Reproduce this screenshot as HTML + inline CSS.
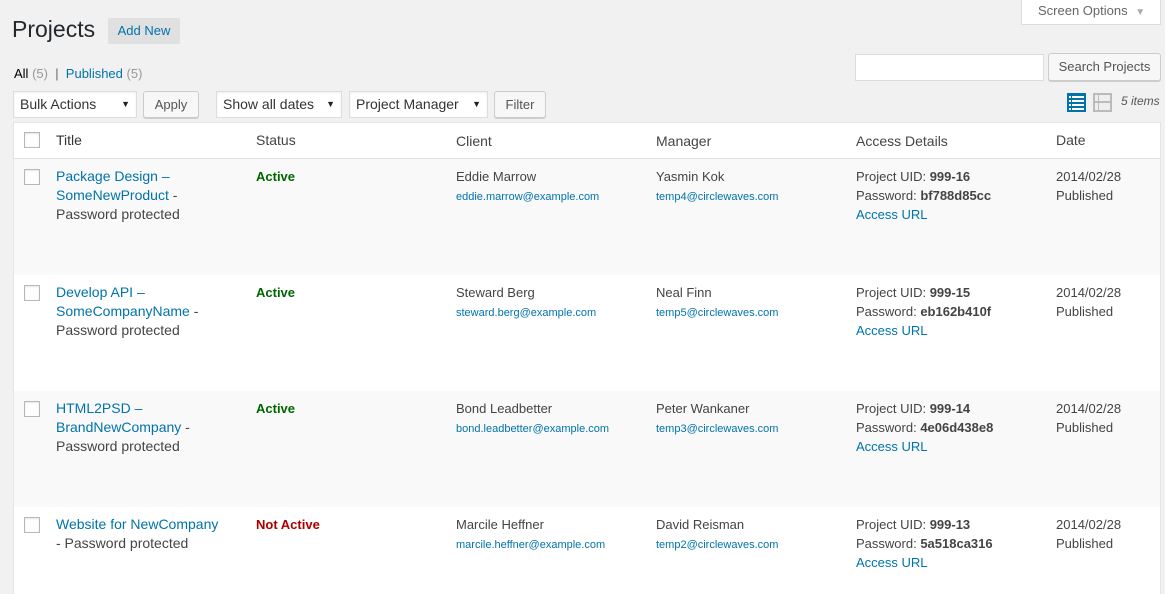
<!DOCTYPE html>
<html><head><meta charset="utf-8"><style>
*{box-sizing:border-box;margin:0;padding:0}
html,body{width:1165px;height:594px;overflow:hidden}
body{background:#f1f1f1;font-family:"Liberation Sans",sans-serif;font-size:14px;color:#444;position:relative}
.a{position:absolute;white-space:nowrap}
a,.l{color:#0073aa;text-decoration:none}
.btn{position:absolute;border:1px solid #ccc;background:#f7f7f7;border-radius:3px;box-shadow:0 1px 0 #ccc;color:#555;font-size:13px;text-align:center}
.sel{position:absolute;border:1px solid #ddd;background:#fff;box-shadow:inset 0 1px 2px rgba(0,0,0,.07);color:#333;font-size:14px;padding-left:6px;line-height:24px}
.sel:after{content:"▼";position:absolute;right:6px;top:0;font-size:9px;color:#222}
.tbl{position:absolute;left:13px;top:122px;width:1148px;height:520px;background:#fff;border:1px solid #e5e5e5}
.hd{position:absolute;left:0;top:0;width:100%;height:36px;border-bottom:1px solid #e1e1e1}
.row{position:absolute;left:0;width:100%;height:116px}
.g{background:#f9f9f9}
.cb{position:absolute;width:16px;height:16px;border:1px solid #b4b9be;background:#fff;box-shadow:inset 0 1px 2px rgba(0,0,0,.1)}
.t{font-size:14px;line-height:19px}
.s{font-size:11px}
b{font-weight:bold;color:#444}
.st{font-size:13px;font-weight:bold}
</style></head><body>
<div class="a" style="left:1021px;top:-1px;width:140px;height:26px;background:#fff;border:1px solid #ddd;border-top:none;font-size:13px;color:#666;line-height:24px;padding-left:16px">Screen Options <span style="color:#aaa;font-size:10px;margin-left:4px">▼</span></div>
<div class="a" style="left:12px;top:16px;font-size:23px;color:#23282d">Projects</div>
<div class="a" style="left:108px;top:18px;width:72px;height:26px;background:#e0e0e0;border-radius:2px;color:#0073aa;font-size:13px;line-height:26px;text-align:center">Add New</div>
<div class="a" style="left:14px;top:66px;font-size:13px;color:#666"><span style="color:#000">All</span> <span style="color:#999">(5)</span> &nbsp;|&nbsp; <span class="l">Published</span> <span style="color:#999">(5)</span></div>
<div class="a" style="left:855px;top:54px;width:189px;height:27px;background:#fff;border:1px solid #ddd"></div>
<div class="btn" style="left:1048px;top:53px;width:113px;height:28px;line-height:26px">Search Projects</div>
<div class="sel" style="left:13px;top:91px;width:124px;height:27px">Bulk Actions</div>
<div class="btn" style="left:143px;top:91px;width:56px;height:27px;line-height:25px">Apply</div>
<div class="sel" style="left:216px;top:91px;width:126px;height:27px">Show all dates</div>
<div class="sel" style="left:349px;top:91px;width:139px;height:27px">Project Manager</div>
<div class="btn" style="left:494px;top:91px;width:52px;height:27px;line-height:25px">Filter</div>
<svg class="a" style="left:1067px;top:93px" width="19" height="19" viewBox="0 0 19 19"><rect width="19" height="19" fill="#0073aa"/><g fill="#fff"><rect x="2" y="3" width="2" height="2"/><rect x="5" y="3" width="12" height="2"/><rect x="2" y="7" width="2" height="2"/><rect x="5" y="7" width="12" height="2"/><rect x="2" y="11" width="2" height="2"/><rect x="5" y="11" width="12" height="2"/><rect x="2" y="15" width="2" height="2"/><rect x="5" y="15" width="12" height="2"/></g></svg>
<svg class="a" style="left:1093px;top:93px" width="19" height="19" viewBox="0 0 19 19"><rect width="19" height="19" fill="#bbb"/><rect x="2" y="2" width="3" height="6" fill="#eee"/><rect x="6" y="2" width="11" height="6" fill="#eee"/><rect x="2" y="10" width="3" height="7" fill="#eee"/><rect x="6" y="10" width="11" height="7" fill="#eee"/></svg>
<div class="a" style="left:1121px;top:94px;font-size:12px;font-style:italic;color:#555">5 items</div>

<div class="tbl">
<div class="hd">
<div class="cb" style="left:10px;top:9px"></div>
<div class="a" style="left:42px;top:9px;font-size:14px;color:#333">Title</div>
<div class="a" style="left:242px;top:9px">Status</div>
<div class="a" style="left:442px;top:10px">Client</div>
<div class="a" style="left:642px;top:10px">Manager</div>
<div class="a" style="left:842px;top:10px">Access Details</div>
<div class="a" style="left:1042px;top:9px">Date</div>
</div>

<div class="row g" style="top:36px">
<div class="cb" style="left:10px;top:10px"></div>
<div class="a t" style="left:42px;top:8px"><span class="l">Package Design –<br>SomeNewProduct</span> -<br>Password protected</div>
<div class="a st" style="left:242px;top:10px;color:#060">Active</div>
<div class="a t" style="left:442px;top:8px;font-size:13px">Eddie Marrow<br><span class="l s">eddie.marrow@example.com</span></div>
<div class="a t" style="left:642px;top:8px;font-size:13px">Yasmin Kok<br><span class="l s">temp4@circlewaves.com</span></div>
<div class="a t" style="left:842px;top:8px;font-size:13px">Project UID: <b>999-16</b><br>Password: <b>bf788d85cc</b><br><span class="l">Access URL</span></div>
<div class="a t" style="left:1042px;top:8px;font-size:13px">2014/02/28<br>Published</div>
</div>

<div class="row" style="top:152px">
<div class="cb" style="left:10px;top:10px"></div>
<div class="a t" style="left:42px;top:8px"><span class="l">Develop API –<br>SomeCompanyName</span> -<br>Password protected</div>
<div class="a st" style="left:242px;top:10px;color:#060">Active</div>
<div class="a t" style="left:442px;top:8px;font-size:13px">Steward Berg<br><span class="l s">steward.berg@example.com</span></div>
<div class="a t" style="left:642px;top:8px;font-size:13px">Neal Finn<br><span class="l s">temp5@circlewaves.com</span></div>
<div class="a t" style="left:842px;top:8px;font-size:13px">Project UID: <b>999-15</b><br>Password: <b>eb162b410f</b><br><span class="l">Access URL</span></div>
<div class="a t" style="left:1042px;top:8px;font-size:13px">2014/02/28<br>Published</div>
</div>

<div class="row g" style="top:268px">
<div class="cb" style="left:10px;top:10px"></div>
<div class="a t" style="left:42px;top:8px"><span class="l">HTML2PSD –<br>BrandNewCompany</span> -<br>Password protected</div>
<div class="a st" style="left:242px;top:10px;color:#060">Active</div>
<div class="a t" style="left:442px;top:8px;font-size:13px">Bond Leadbetter<br><span class="l s">bond.leadbetter@example.com</span></div>
<div class="a t" style="left:642px;top:8px;font-size:13px">Peter Wankaner<br><span class="l s">temp3@circlewaves.com</span></div>
<div class="a t" style="left:842px;top:8px;font-size:13px">Project UID: <b>999-14</b><br>Password: <b>4e06d438e8</b><br><span class="l">Access URL</span></div>
<div class="a t" style="left:1042px;top:8px;font-size:13px">2014/02/28<br>Published</div>
</div>

<div class="row" style="top:384px">
<div class="cb" style="left:10px;top:10px"></div>
<div class="a t" style="left:42px;top:8px"><span class="l">Website for NewCompany</span><br>- Password protected</div>
<div class="a st" style="left:242px;top:10px;color:#a00">Not Active</div>
<div class="a t" style="left:442px;top:8px;font-size:13px">Marcile Heffner<br><span class="l s">marcile.heffner@example.com</span></div>
<div class="a t" style="left:642px;top:8px;font-size:13px">David Reisman<br><span class="l s">temp2@circlewaves.com</span></div>
<div class="a t" style="left:842px;top:8px;font-size:13px">Project UID: <b>999-13</b><br>Password: <b>5a518ca316</b><br><span class="l">Access URL</span></div>
<div class="a t" style="left:1042px;top:8px;font-size:13px">2014/02/28<br>Published</div>
</div>
</div>
</body></html>
